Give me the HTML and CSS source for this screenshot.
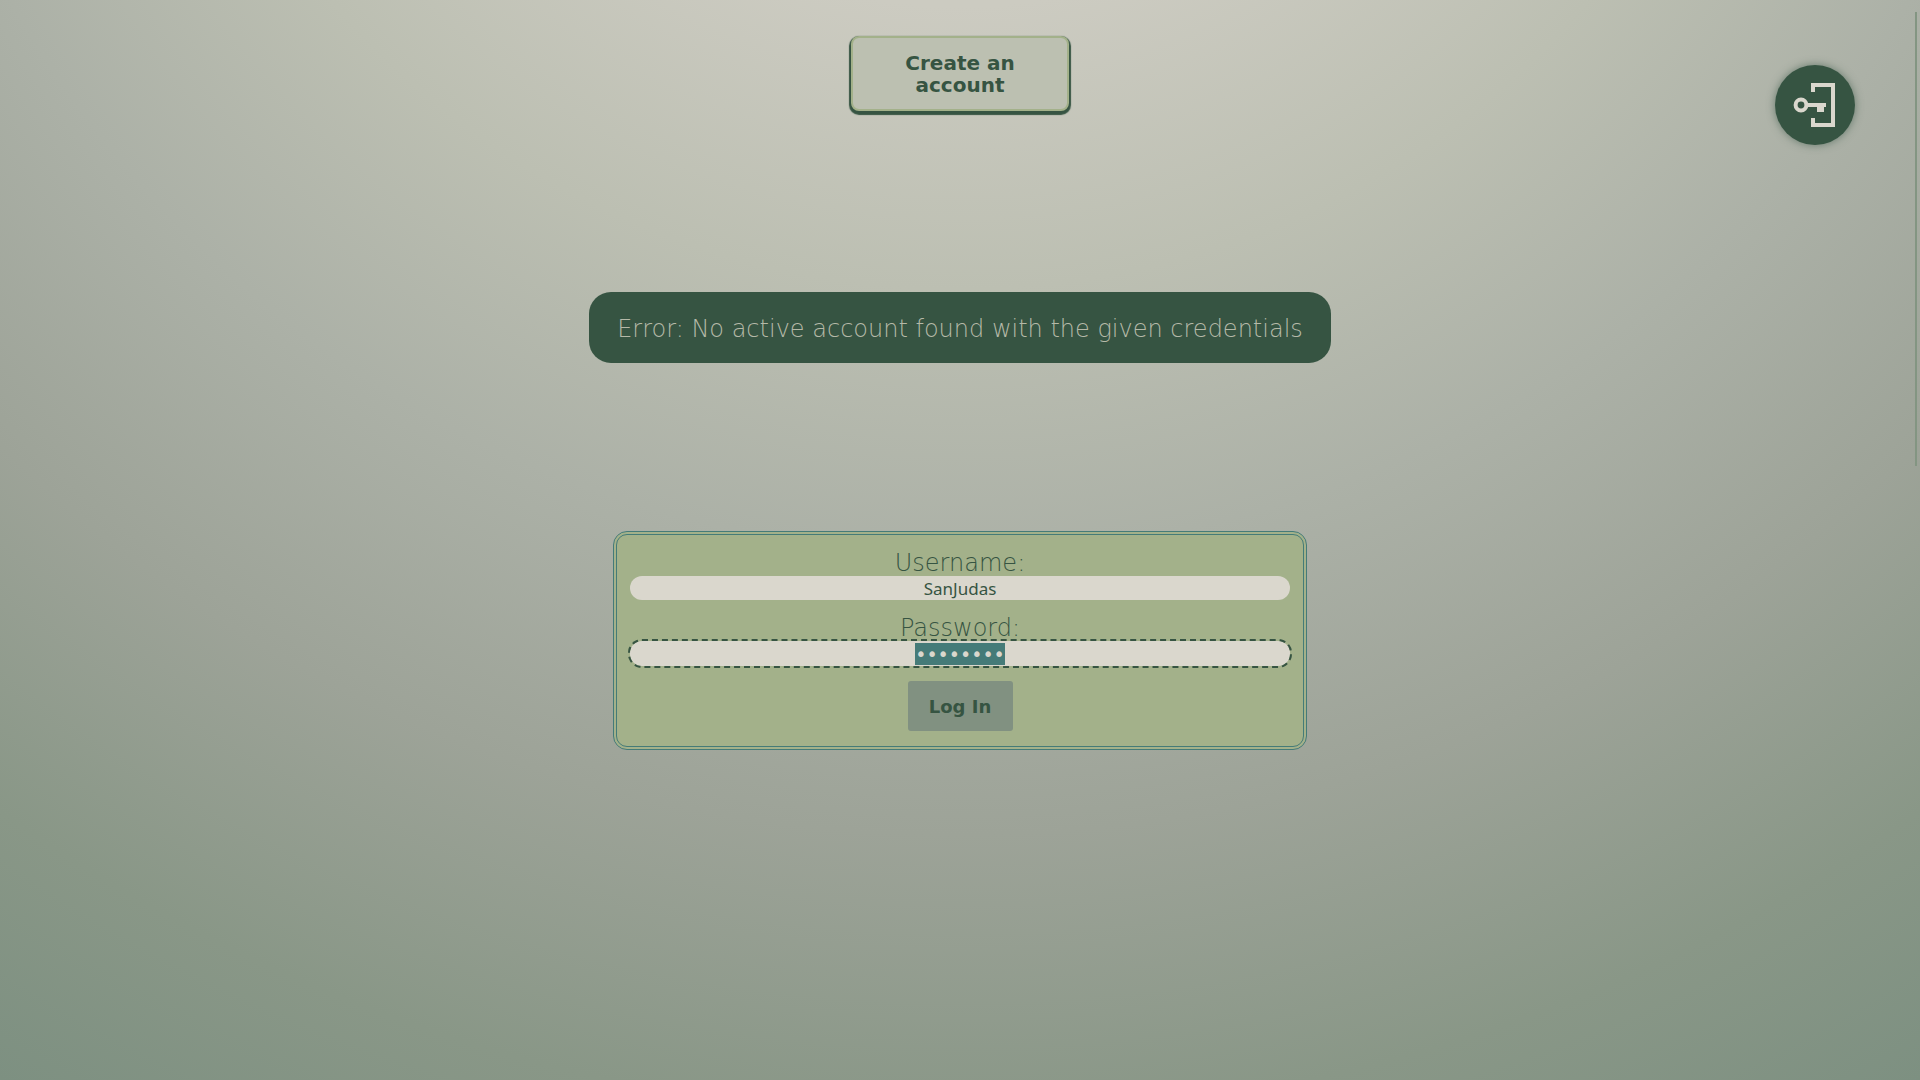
FILE: index.html
```html
<!DOCTYPE html>
<html lang="en">
<head>
<meta charset="utf-8">
<title>Log In</title>
<link rel="stylesheet" href="styles.css">
</head>
<body>
<header class="topbar">
  <button class="create" type="button">Create an account</button>
  <button class="login-toggle" type="button" aria-label="Log in">
    <svg viewBox="0 0 80 80" width="80" height="80" fill="none" stroke="currentColor" stroke-width="4" aria-hidden="true">
      <path d="M38 27V20H58V60H38V53"/>
      <circle cx="26" cy="40" r="5.4"/>
      <path d="M31 40H51"/>
      <path d="M42 41H49V47H42Z" fill="currentColor" stroke="none"/>
    </svg>
  </button>
</header>
<main class="content">
  <p class="error" role="alert">Error: No active account found with the given credentials</p>
  <form class="login">
    <label class="label" for="username">Username:</label>
    <input class="field" id="username" type="text" value="SanJudas">
    <label class="label" for="password">Password:</label>
    <input class="field secret" id="password" type="password" value="password">
    <button class="submit" type="button">Log In</button>
  </form>
</main>
<div class="scroll-thumb"></div>
<script src="script.js"></script>
</body>
</html>
```
FILE: styles.css
```css
* { box-sizing: border-box; }

body {
  margin: 0;
  min-height: 100vh;
  color: #365442;
  font-family: "DejaVu Sans", sans-serif;
  background: radial-gradient(circle farthest-corner at 50% -50%, #cccbc1 29%, #bcbfb2 44%, #acb1a7 58%, #9da398 73%, #899787 88%, #7d9081 100%) no-repeat;
}

button { font: inherit; color: inherit; }

.topbar {
  display: grid;
  grid-template-columns: 1fr 218px 1fr;
  align-items: start;
  padding: 36px 65px 0;
}

.create {
  grid-column: 2;
  height: 75px;
  padding: 0 48px;
  border: 2px solid #a3b18a;
  border-radius: 8px;
  background: #bcc0b1;
  box-shadow: 0 2px 1px 2px #365442;
  font-size: 20px;
  font-weight: 600;
  line-height: 22px;
}

.login-toggle {
  justify-self: end;
  width: 80px;
  height: 80px;
  margin-top: 29px;
  padding: 0;
  border: 0;
  border-radius: 50%;
  color: #dad7cd;
  background: #365442;
  box-shadow: 0 0 8px #36544299;
}

.login-toggle svg { display: block; }

.content {
  display: flex;
  flex-direction: column;
  align-items: center;
  gap: 168px;
  padding-top: 147px;
}

.error {
  margin: 0;
  padding: 22px 28px 18px;
  border-radius: 22px;
  background: #365442;
  color: #b5b9a8;
  font-size: 24px;
  font-weight: 200;
  line-height: 31px;
}

.login {
  display: flex;
  flex-direction: column;
  align-items: center;
  width: 694px;
  padding: 15px 13px 15px;
  border: 4px double #457b78;
  border-radius: 14px;
  background: #a3b18a;
}

.label {
  font-size: 24px;
  font-weight: 200;
  line-height: 26px;
}

.field {
  width: 100%;
  height: 24px;
  margin-bottom: 15px;
  padding: 0 8px;
  border: 0;
  border-radius: 12px;
  background: #dad7cd;
  color: #365442;
  font: 17px "Noto Sans", sans-serif;
  text-align: center;
}

.secret { height: 25px; font: 19px "DejaVu Sans", sans-serif; }

.field:focus { outline: 2px dashed #365442; }

.field::selection { background: #457b78; color: #dad7cd; }

.submit {
  width: 105px;
  height: 50px;
  border: 0;
  border-radius: 3px;
  background: #819181;
  font-size: 18px;
  font-weight: 600;
}

.scroll-thumb {
  position: fixed;
  top: 12px;
  right: 3px;
  width: 2px;
  height: 42vh;
  background: #839582;
}
```
FILE: script.js
```js
const password = document.getElementById("password");
password.focus();
password.select();
```
